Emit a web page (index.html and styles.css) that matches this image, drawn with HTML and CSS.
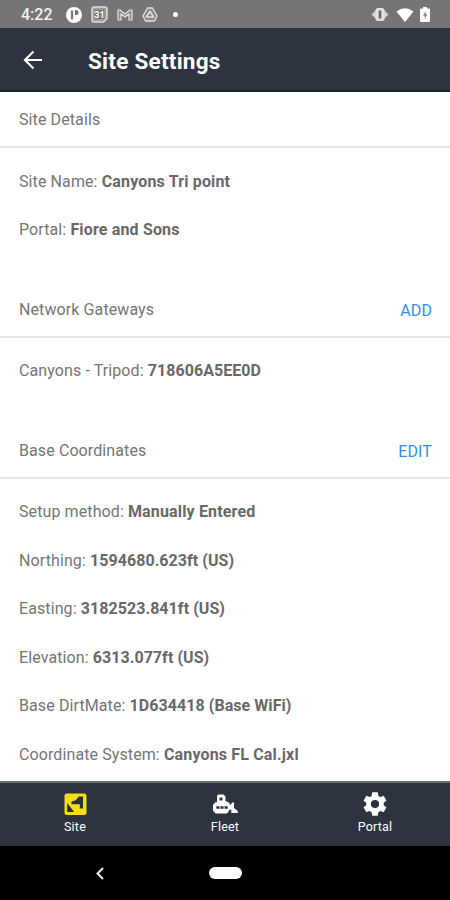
FILE: index.html
```html
<!DOCTYPE html>
<html lang="en">
<head>
<meta charset="utf-8">
<title>Site Settings</title>
<link rel="stylesheet" href="styles.css">
</head>
<body>
<div class="status">
  <span class="time">4:22</span>
  <svg class="s-app" width="16" height="16" viewBox="0 0 16 16"><circle cx="8" cy="8" r="8" fill="#fff"/><path d="M6 3.500v9" stroke="#777" stroke-width="2.200"/><path d="M9 3h1a2.500 2.500 0 0 1 0 5H9z" fill="#777"/></svg>
  <svg class="s-cal" width="17" height="17" viewBox="0 0 17 17"><path d="M3 1h11a2 2 0 0 1 2 2v9.500L12.500 16H3a2 2 0 0 1-2-2V3a2 2 0 0 1 2-2z" fill="#a0a0a0" stroke="#dcdcdc" stroke-width="1.500"/><rect x="3.500" y="3.700" width="10" height="9.300" fill="#777"/><text x="8.500" y="11.800" text-anchor="middle" class="cal-text">31</text></svg>
  <svg class="s-mail" width="16" height="12" viewBox="0 0 16 12"><path d="M1 11V1h2l5 4 5-4h2v10h-3V5L8 8 4 5v6z" fill="#8b8b8b" stroke="#e4e4e4" stroke-width="1.200" stroke-linejoin="round"/></svg>
  <svg class="s-drive" width="16" height="15" viewBox="0 0 16 15"><path d="M5.500 1h5l4.500 8-2.500 5h-9L1 9z" fill="#8b8b8b" stroke="#e4e4e4" stroke-width="1.300" stroke-linejoin="round"/><path d="M8 4.500 11.500 10h-7z" fill="#777" stroke="#e4e4e4" stroke-width="1.500" stroke-linejoin="round"/></svg>
  <i class="dot"></i>
  <svg class="s-vib" width="18" height="13" viewBox="0 0 18 13"><path d="M.5 6.500 5 2v9zM17.500 6.500 13 2v9z" fill="#d2d2d2"/><rect x="4.500" y="0" width="9" height="13" rx="2.500" fill="#e2e2e2"/><path d="M9 2.500v8" stroke="#686868" stroke-width="2.600"/></svg>
  <svg class="s-wifi" width="18" height="14" viewBox="0 0 18 14"><path d="M.5 3.500Q9-3 17.500 3.500L9 14z" fill="#fff"/></svg>
  <svg class="s-bat" width="10" height="15" viewBox="0 0 10 15"><path d="M3 0h4v1.500h2q1 0 1 1V14q0 1-1 1H1q-1 0-1-1V2.500q0-1 1-1h2z" fill="#fff"/><path d="M5.700 4.500 3 8.500h1.700V12l2.600-4.500H5.700z" fill="#777"/></svg>
</div>
<header class="bar">
  <svg class="back" width="20" height="20" viewBox="0 0 20 20"><path d="M19 10H2M10.500 1.500 2 10l8.500 8.500" fill="none" stroke="#fff" stroke-width="2.200"/></svg>
  <h1>Site Settings</h1>
</header>
<main>
  <section>
    <div class="head"><h2>Site Details</h2></div>
    <div class="rows">
      <p><span>Site Name: </span><b>Canyons Tri point</b></p>
      <p><span>Portal: </span><b>Fiore and Sons</b></p>
    </div>
  </section>
  <section>
    <div class="head"><h2>Network Gateways</h2><a>ADD</a></div>
    <div class="rows">
      <p><span>Canyons - Tripod: </span><b class="num">718606A5EE0D</b></p>
    </div>
  </section>
  <section>
    <div class="head"><h2>Base Coordinates</h2><a>EDIT</a></div>
    <div class="rows">
      <p><span>Setup method: </span><b>Manually Entered</b></p>
      <p><span>Northing: </span><b class="num">1594680.623ft (US)</b></p>
      <p><span>Easting: </span><b class="num">3182523.841ft (US)</b></p>
      <p><span>Elevation: </span><b class="num">6313.077ft (US)</b></p>
      <p><span>Base DirtMate: </span><b class="num">1D634418 (Base WiFi)</b></p>
      <p><span>Coordinate System: </span><b>Canyons FL Cal.jxl</b></p>
    </div>
  </section>
</main>
<nav class="tabs">
  <div class="tab">
    <svg width="24" height="24" viewBox="0 0 24 24"><rect x="1.500" y="1.500" width="22" height="21.500" rx="2.500" fill="#f5df12"/><path d="M15.800 4.500H20v12h-3.200v-4.300H8.500V9.500l4.300-1.300zM4.200 11l7 9h-7z" fill="#29303b"/></svg>
    <span>Site</span>
  </div>
  <div class="tab">
    <svg width="26" height="24" viewBox="0 0 26 24"><path d="M5 10V4.500Q5 2.500 7 2.500h4.500l2 2V9l3.500 1.500 1 2.500 2.500-2.500h1.500V16l3.800 3v2h-6.500v-3.500L17 18l-.5 2-2 1.500h-11L1 18.500V13l2-2.500z" fill="#fff"/><path d="M7.500 5.500h3V8.500h-3z" fill="#2e3541"/><path d="M4.300 15.500h11.500" stroke="#2e3541" stroke-width="2.400" stroke-dasharray="3.200 .9"/></svg>
    <span>Fleet</span>
  </div>
  <div class="tab">
    <svg width="28" height="28" viewBox="0 0 24 24"><path fill="#fff" d="M19.430 12.980c.04-.32.07-.64.07-.98s-.03-.66-.07-.98l2.110-1.650c.19-.15.24-.42.12-.64l-2-3.460c-.12-.22-.39-.3-.61-.22l-2.490 1c-.52-.4-1.080-.73-1.690-.98l-.38-2.650C14.460 2.180 14.250 2 14 2h-4c-.25 0-.46.18-.49.42l-.38 2.650c-.61.25-1.170.59-1.690.98l-2.490-1c-.23-.09-.49 0-.61.22l-2 3.460c-.13.22-.07.49.12.64l2.110 1.650c-.04.32-.07.65-.07.98s.03.66.07.98l-2.110 1.650c-.19.15-.24.42-.12.64l2 3.460c.12.22.39.3.61.22l2.490-1c.52.4 1.080.73 1.690.98l.38 2.650c.03.24.24.42.49.42h4c.25 0 .46-.18.49-.42l.38-2.650c.61-.25 1.170-.59 1.690-.98l2.490 1c.23.09.49 0 .61-.22l2-3.460c.12-.22.07-.49-.12-.64zM12 15.500A3.500 3.500 0 1 1 12 8.500a3.500 3.500 0 0 1 0 7z"/></svg>
    <span>Portal</span>
  </div>
</nav>
<div class="sysnav">
  <div><svg width="8" height="13" viewBox="0 0 8 13"><path d="M7 1 1.500 6.500 7 12" fill="none" stroke="#eee" stroke-width="2"/></svg></div>
  <div><i class="pill"></i></div>
</div>
</body>
</html>
```
FILE: styles.css
```css
* { box-sizing: border-box; }
body {
  margin: 0;
  width: 450px;
  height: 900px;
  display: flex;
  flex-direction: column;
  overflow: hidden;
  background: #fff;
  font-family: Roboto, "Liberation Sans", sans-serif;
}
h1, h2, p { margin: 0; }
svg { display: block; flex: none; }
.status {
  height: 28px;
  flex: none;
  display: flex;
  align-items: center;
  padding: 1px 20px 0 21px;
  background: #757575;
}
.time { width: 45px; color: #f2f2f2; font-size: 16px; font-weight: 500; line-height: 28px; }
.s-cal { margin-left: 9px; }
.s-mail { margin-left: 9px; }
.s-drive { margin-left: 9px; }
.cal-text { font-size: 9px; font-weight: 700; fill: #fff; }
.dot { width: 5px; height: 5px; margin-left: 15px; border-radius: 50%; background: #fff; }
.s-vib { margin-left: auto; }
.s-wifi { margin-left: 7px; }
.s-bat { margin-left: 6px; }
.bar {
  height: 64px;
  flex: none;
  display: flex;
  align-items: center;
  padding: 2px 0 0 23px;
  background: #2d3440;
  border-bottom: 2px solid #17212c;
}
.bar h1 { margin: 2px 0 0 45px; color: #fff; font-size: 22.500px; font-weight: 700; line-height: 30px; letter-spacing: 0.25px; }
main { height: 689px; flex: none; color: #757575; font-size: 16px; letter-spacing: 0.1px; }
section { margin-bottom: 28px; }
.head {
  height: 56px;
  display: flex;
  align-items: center;
  justify-content: space-between;
  padding: 1px 18px 0 19px;
  border-bottom: 2px solid #e6e6e6;
}
.head h2 { font-size: 16px; font-weight: 400; }
.head a { margin-top: 2px; color: #2f91e8; }
.rows { padding-top: 9.5px; margin-bottom: -1px; }
.rows p { height: 48.500px; padding-left: 19px; line-height: 48.500px; white-space: nowrap; }
.rows b { color: #686868; font-weight: 700; letter-spacing: 0.16px; }
.rows .num { letter-spacing: 0.06px; }
.tabs {
  height: 65px;
  flex: none;
  display: flex;
  background: #2d3440;
  border-top: 2px solid #68707a;
}
.tab { width: 150px; height: 54px; display: flex; flex-direction: column; align-items: center; }
.tab svg { height: 28px; margin-top: 7px; }
.tab span { margin-top: 1px; color: #fff; font-size: 12.500px; font-weight: 400; line-height: 15px; letter-spacing: 0.2px; }
.sysnav { height: 54px; flex: none; display: flex; align-items: center; background: #000; }
.sysnav div { width: 50px; margin-left: 75px; display: flex; justify-content: center; }
.pill { width: 33px; height: 12px; border-radius: 6px; background: #fff; }
```
